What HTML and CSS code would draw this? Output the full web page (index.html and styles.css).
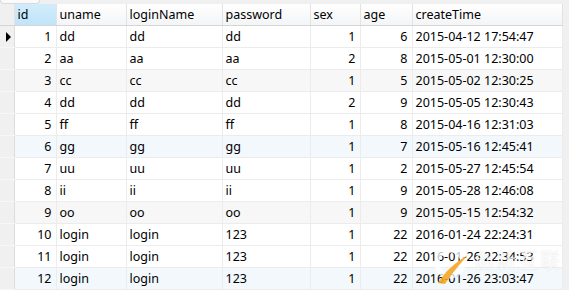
FILE: index.html
```html
<!DOCTYPE html>
<html lang="en">
<head>
	<meta charset="UTF-8">
	<title>user</title>
	<link rel="stylesheet" href="styles.css">
</head>
<body>
	<div class="topbar"><div class="tab-edge"></div></div>
	<div class="grid-wrap">
		<table class="grid">
			<colgroup>
				<col class="c-ind"><col class="c-id"><col class="c-uname"><col class="c-login">
				<col class="c-pass"><col class="c-sex"><col class="c-age"><col class="c-time">
			</colgroup>
			<thead>
				<tr>
					<th class="ind"></th>
					<th class="sorted">id</th>
					<th>uname</th>
					<th>loginName</th>
					<th>password</th>
					<th>sex</th>
					<th>age</th>
					<th>createTime</th>
				</tr>
			</thead>
			<tbody>
				<tr><td class="ind"><span class="arrow"></span></td><td class="num">1</td><td>dd</td><td>dd</td><td>dd</td><td class="num">1</td><td class="num">6</td><td>2015-04-12 17:54:47</td></tr>
				<tr><td class="ind"></td><td class="num">2</td><td>aa</td><td>aa</td><td>aa</td><td class="num">2</td><td class="num">8</td><td>2015-05-01 12:30:00</td></tr>
				<tr class="gray"><td class="ind"></td><td class="num">3</td><td>cc</td><td>cc</td><td>cc</td><td class="num">1</td><td class="num">5</td><td>2015-05-02 12:30:25</td></tr>
				<tr><td class="ind"></td><td class="num">4</td><td>dd</td><td>dd</td><td>dd</td><td class="num">2</td><td class="num">9</td><td>2015-05-05 12:30:43</td></tr>
				<tr><td class="ind"></td><td class="num">5</td><td>ff</td><td>ff</td><td>ff</td><td class="num">1</td><td class="num">8</td><td>2015-04-16 12:31:03</td></tr>
				<tr class="blue"><td class="ind"></td><td class="num">6</td><td>gg</td><td>gg</td><td>gg</td><td class="num">1</td><td class="num">7</td><td>2015-05-16 12:45:41</td></tr>
				<tr><td class="ind"></td><td class="num">7</td><td>uu</td><td>uu</td><td>uu</td><td class="num">1</td><td class="num">2</td><td>2015-05-27 12:45:54</td></tr>
				<tr><td class="ind"></td><td class="num">8</td><td>ii</td><td>ii</td><td>ii</td><td class="num">1</td><td class="num">9</td><td>2015-05-28 12:46:08</td></tr>
				<tr class="gray"><td class="ind"></td><td class="num">9</td><td>oo</td><td>oo</td><td>oo</td><td class="num">1</td><td class="num">9</td><td>2015-05-15 12:54:32</td></tr>
				<tr><td class="ind"></td><td class="num">10</td><td>login</td><td>login</td><td>123</td><td class="num">1</td><td class="num">22</td><td>2016-01-24 22:24:31</td></tr>
				<tr><td class="ind"></td><td class="num">11</td><td>login</td><td>login</td><td>123</td><td class="num">1</td><td class="num">22</td><td>2016-01-26 22:34:53</td></tr>
				<tr class="blue"><td class="ind"></td><td class="num">12</td><td>login</td><td>login</td><td>123</td><td class="num">1</td><td class="num">22</td><td>2016-01-26 23:03:47</td></tr>
			</tbody>
		</table>
		<div class="filler"></div>
		<div class="watermark">
			<svg class="wm-logo" width="38" height="40" viewBox="0 0 38 40">
				<circle cx="18" cy="18" r="13" fill="none" stroke="#ffffff" stroke-opacity="0.75" stroke-width="5"/>
				<path d="M6 38 C12 28 22 18 36 10 C28 19 20 28 13 39 Z" fill="#f5a623" fill-opacity="0.9"/>
			</svg>
			<span class="wm-text">创新互联</span>
		</div>
	</div>
</body>
</html>
```

FILE: styles.css
```css
body {
	margin: 0;
	background: #ffffff;
	font-family: "Noto Sans", "Noto Sans CJK SC", sans-serif;
	font-size: 12.5px;
	color: #000;
}
.topbar {
	height: 4px;
	background: #f0f0f0;
	overflow: hidden;
}
.tab-edge {
	width: 40px;
	height: 4px;
	background: #fafafa;
	border: 1px solid #d9d9d9;
	border-top: none;
	border-radius: 0 0 4px 4px;
	box-sizing: border-box;
}
.grid-wrap {
	display: flex;
	position: relative;
}
.filler {
	flex: 1;
	background: #f0f0f0;
}
.grid {
	border-collapse: collapse;
	table-layout: fixed;
	width: 562px;
}
.c-ind { width: 14px; }
.c-id { width: 42px; }
.c-uname { width: 70px; }
.c-login { width: 96px; }
.c-pass { width: 88px; }
.c-sex { width: 50px; }
.c-age { width: 52px; }
.c-time { width: 150px; }

.grid th {
	height: 21px;
	padding: 0 3px;
	font-weight: normal;
	text-align: left;
	background: linear-gradient(#ffffff, #f3f4f6);
	border-right: 1px solid #e2e3e5;
	border-bottom: 1px solid #d5d5d5;
	white-space: nowrap;
}
.grid th.sorted {
	background: linear-gradient(#d3ecfb, #bfe4f9);
}
.grid th.ind {
	background: #f0f0f0;
}
.grid td {
	height: 21px;
	padding: 0 3px;
	border-right: 1px solid #ececec;
	border-bottom: 1px solid #ececec;
	white-space: nowrap;
	overflow: hidden;
}
.grid td.num {
	text-align: right;
	padding-right: 4px;
}
.grid td.ind {
	background: #f0f0f0;
	border-right: 1px solid #dcdcdc;
	border-bottom: 1px solid #f7f7f7;
	padding: 0;
}
.arrow {
	display: block;
	width: 0;
	height: 0;
	margin-left: 6px;
	border-top: 5px solid transparent;
	border-bottom: 5px solid transparent;
	border-left: 5px solid #000;
}
.grid tr.gray td { background: #f7f7f7; }
.grid tr.blue td { background: #f3f8fd; }
.grid tr.gray td.ind,
.grid tr.blue td.ind { background: #f0f0f0; }

.watermark {
	position: absolute;
	left: 432px;
	top: 241px;
	display: flex;
	align-items: flex-start;
	gap: 4px;
	pointer-events: none;
}
.wm-text {
	margin-top: 4px;
	font-size: 20px;
	line-height: 24px;
	letter-spacing: 2px;
	color: rgba(255, 255, 255, 0.8);
	text-shadow: 0 0 2px rgba(0, 0, 0, 0.12);
}
```
